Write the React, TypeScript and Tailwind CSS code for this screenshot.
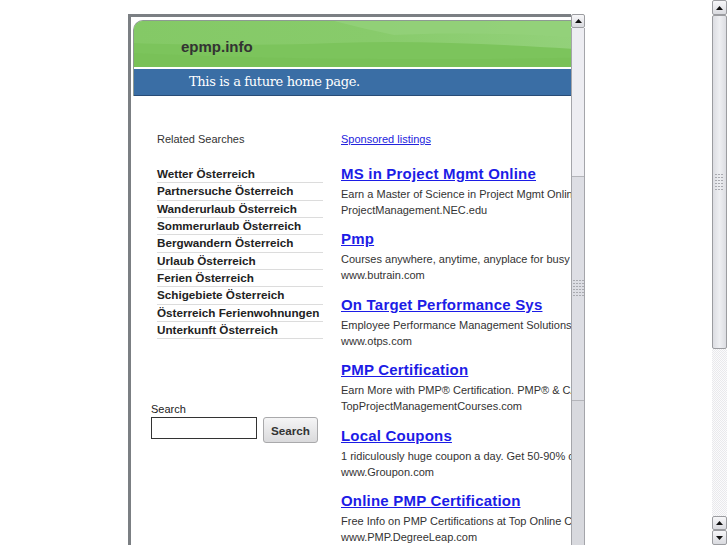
import React from "react";

const related = [
  "Wetter Österreich",
  "Partnersuche Österreich",
  "Wanderurlaub Österreich",
  "Sommerurlaub Österreich",
  "Bergwandern Österreich",
  "Urlaub Österreich",
  "Ferien Österreich",
  "Schigebiete Österreich",
  "Österreich Ferienwohnungen",
  "Unterkunft Österreich",
];

const ads: [string, string, string][] = [
  ["MS in Project Mgmt Online", "Earn a Master of Science in Project Mgmt Online", "ProjectManagement.NEC.edu"],
  ["Pmp", "Courses anywhere, anytime, anyplace for busy professionals", "www.butrain.com"],
  ["On Target Performance Sys", "Employee Performance Management Solutions", "www.otps.com"],
  ["PMP Certification", "Earn More with PMP® Certification. PMP® & CAPM", "TopProjectManagementCourses.com"],
  ["Local Coupons", "1 ridiculously huge coupon a day. Get 50-90% off", "www.Groupon.com"],
  ["Online PMP Certification", "Free Info on PMP Certifications at Top Online Colleges", "www.PMP.DegreeLeap.com"],
];

function Up() {
  return (
    <svg width="7" height="4" viewBox="0 0 7 4">
      <path d="M3.5 0L7 4H0z" fill="#111" />
    </svg>
  );
}
function Down() {
  return (
    <svg width="7" height="4" viewBox="0 0 7 4">
      <path d="M0 0H7L3.5 4z" fill="#111" />
    </svg>
  );
}

function Grip({ w, h }: { w: number; h: number }) {
  const dots: React.ReactNode[] = [];
  for (let r = 0; r * 3 < h; r++) {
    for (let c = 0; c * 3 < w; c++) {
      dots.push(<rect key={`${r}-${c}`} x={c * 3} y={r * 3} width="2" height="1" fill="#a9aab0" />);
    }
  }
  return (
    <svg width={w} height={h} viewBox={`0 0 ${w} ${h}`}>
      {dots}
    </svg>
  );
}

function ScrollButton({ dir, cls }: { dir: "up" | "down"; cls: string }) {
  return (
    <div
      className={`${cls} shrink-0 flex items-center justify-center rounded-[2px] border border-[#9b9ca0] bg-[linear-gradient(#f7f7f9,#d9dadf)]`}
    >
      {dir === "up" ? <Up /> : <Down />}
    </div>
  );
}

function InnerScrollbar() {
  return (
    <div className="w-[14px] h-full shrink-0 flex flex-col">
      <ScrollButton dir="up" cls="h-[14px]" />
      <div className="flex-1 flex flex-col border-x border-[#a4a5aa] bg-[#ededf2]">
        <div className="h-[148px] shrink-0" />
        <div className="h-[225px] shrink-0 flex items-center justify-center border-y border-[#b4b5ba] bg-[#dddee4]">
          <Grip w={11} h={17} />
        </div>
        <div className="flex-1 bg-[#d8d9de]" />
      </div>
    </div>
  );
}

function OuterScrollbar() {
  return (
    <div className="w-[15px] h-[545px] shrink-0 flex flex-col">
      <ScrollButton dir="up" cls="h-[15px]" />
      <div className="h-[334px] shrink-0 flex items-center justify-center rounded-[2px] border border-[#9b9ca0] bg-[linear-gradient(90deg,#dcdde2,#eeeff2_50%,#dcdde2)]">
        <Grip w={9} h={17} />
      </div>
      <div className="flex-1 bg-[repeating-conic-gradient(#e9e9ec_0_25%,#fbfbfc_0_50%)] bg-[length:2px_2px]" />
      <ScrollButton dir="up" cls="h-[14px]" />
      <ScrollButton dir="down" cls="h-[15px]" />
    </div>
  );
}

function Header() {
  return (
    <div className="ml-[2px] mt-[3px] w-[480px] shrink-0 overflow-hidden rounded-tl-[10px] border-l border-t border-[#8e9a93]">
      <div className="relative h-[46px] bg-[#7cc45c]">
        <svg className="absolute inset-0" width="480" height="46" viewBox="0 0 480 46" preserveAspectRatio="none">
          <defs>
            <linearGradient id="g1" x1="0" y1="0" x2="1" y2="0">
              <stop offset="0" stopColor="#84c966" />
              <stop offset="0.5" stopColor="#88cb6b" />
              <stop offset="1" stopColor="#95d27d" />
            </linearGradient>
          </defs>
          <path d="M0 0H480V30C400 26 300 18 200 22C120 25 50 24 0 22Z" fill="url(#g1)" />
          <path d="M200 0H480V20C420 14 330 10 260 14C240 10 220 5 200 0Z" fill="#93d17b" opacity="0.8" />
          <path d="M0 32C120 38 300 40 480 36V46H0Z" fill="#78c157" opacity="0.7" />
        </svg>
        <div className="relative pt-[16px] pl-[47px] text-[15px] font-bold leading-[20px] text-[#333]">epmp.info</div>
      </div>
      <div className="h-[2px] bg-white" />
      <div className="h-[27px] flex items-center border-b border-[#284c77] bg-[#3a6ea5] pl-[55px] font-['DejaVu_Serif',serif] text-[13px] tracking-[-0.35px] text-white">
        This is a future home page.
      </div>
    </div>
  );
}

export default function App() {
  return (
    <div className="w-[727px] h-[545px] flex overflow-hidden bg-white font-['Liberation_Sans',Arial,sans-serif]">
      <div className="flex-1 flex pl-[128px] pt-[14px]">
        <div className="w-[443px] h-full shrink-0 flex flex-col overflow-hidden border-l-[3px] border-t-[3px] border-[#7b7f83] bg-white">
          <Header />
          <div className="flex pt-[35px]">
            <div className="ml-[20px] w-[172px] shrink-0">
              <div className="pl-[6px] text-[11px] leading-[16px] text-[#333]">Related Searches</div>
              <div className="mt-[19px] ml-[6px] w-[166px]">
                {related.map((r) => (
                  <div
                    key={r}
                    className="h-[17.33px] flex items-center border-b border-[#dcdcdc] text-[11.7px] font-bold leading-[16px] text-[#222] whitespace-nowrap"
                  >
                    {r}
                  </div>
                ))}
              </div>
              <div className="mt-[63px] text-[11px] leading-[15px] text-[#222]">Search</div>
              <div className="flex items-start gap-[6px]">
                <div className="w-[106px] h-[22px] border border-[#333] bg-white" />
                <div className="w-[55px] h-[26px] flex items-center justify-center rounded-[3px] border border-[#a9a9ab] bg-[linear-gradient(#f5f5f6,#dadadc)] text-[11.7px] font-bold text-[#333]">
                  Search
                </div>
              </div>
            </div>
            <div className="ml-[18px] w-[400px] shrink-0 whitespace-nowrap">
              <div className="text-[11px] leading-[16px] text-[#2323dd] underline">Sponsored listings</div>
              <div className="mt-[17px]">
                {ads.map(([t, d, u]) => (
                  <div key={t} className="h-[65.4px]">
                    <div className="text-[15px] tracking-[0.2px] font-bold leading-[20px] text-[#1c1ce6] underline">{t}</div>
                    <div className="mt-[2px] text-[11px] leading-[16px] text-[#333]">{d}</div>
                    <div className="text-[11px] leading-[16px] text-[#333]">{u}</div>
                  </div>
                ))}
              </div>
            </div>
          </div>
        </div>
        <InnerScrollbar />
      </div>
      <OuterScrollbar />
    </div>
  );
}
